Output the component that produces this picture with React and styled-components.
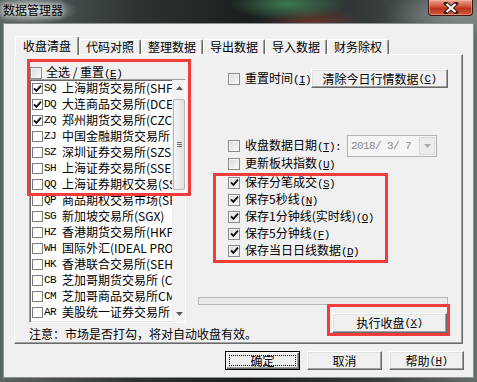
import styled, { createGlobalStyle } from "styled-components";

const GlobalStyle = createGlobalStyle`
  html, body {
    margin: 0;
    padding: 0;
    background: #1f2323;
  }
  body {
    font-family: "Noto Sans CJK SC", "Liberation Sans", sans-serif;
    font-size: 12px;
    color: #000;
  }
`;

const RED = "#f23c3c";

const Window = styled.div`
  width: 477px;
  height: 382px;
  box-sizing: border-box;
  padding: 0 3px 4px;
  display: flex;
  flex-direction: column;
  background:
    radial-gradient(46px 14px at 32px 10px, rgba(205, 212, 212, 0.85), rgba(205, 212, 212, 0)),
    radial-gradient(60px 16px at 288px 4px, rgba(70, 150, 95, 0.75), rgba(70, 150, 95, 0)),
    radial-gradient(50px 18px at 312px 24px, rgba(160, 60, 45, 0.55), rgba(160, 60, 45, 0)),
    radial-gradient(70px 26px at 455px 14px, rgba(150, 160, 160, 0.7), rgba(150, 160, 160, 0)),
    linear-gradient(90deg, #5d6565 0%, #2e3434 28%, #1a1e1e 52%, #353b3b 78%, #666e6e 100%);
`;

const TitleBar = styled.div`
  height: 23px;
  display: flex;
  justify-content: space-between;
  align-items: flex-start;
`;

const Title = styled.div`
  padding-top: 3px;
  line-height: 14px;
  color: #000;
  text-shadow: 0 0 5px rgba(255, 255, 255, 0.9), 0 0 9px rgba(255, 255, 255, 0.6);
`;

const CloseButton = styled.div`
  width: 45px;
  height: 16px;
  margin-right: 1px;
  box-sizing: border-box;
  border: 1px solid #3e1810;
  border-top: none;
  border-radius: 0 0 4px 4px;
  background: linear-gradient(#e9a494 0%, #d4583e 42%, #b9331a 55%, #cf5a3c 100%);
  box-shadow: inset 0 0 0 1px rgba(255, 200, 185, 0.45);
  display: flex;
  align-items: center;
  justify-content: center;
`;

const Client = styled.div`
  flex: 1;
  background: #f0f0f0;
  border: 1px solid #8d9393;
  padding: 12px 10px 7px;
  display: flex;
  flex-direction: column;
`;

const TabRow = styled.div`
  height: 18px;
  display: flex;
  align-items: flex-end;
`;

const Tab = styled.div`
  box-sizing: border-box;
  height: ${(p) => (p.$active ? "19px" : "15px")};
  padding: ${(p) => (p.$active ? "2px 7px 0" : "0 6px")};
  margin: ${(p) => (p.$active ? "0 0 -1px 1px" : "0")};
  position: relative;
  z-index: ${(p) => (p.$active ? 1 : 0)};
  line-height: 14px;
  white-space: nowrap;
  background: #f0f0f0;
  border: 1px solid;
  border-color: #fff #696969 transparent #fff;
  border-bottom: none;
  border-radius: 2px 2px 0 0;
  box-shadow: inset -1px 0 #a0a0a0;
`;

const Panel = styled.div`
  position: relative;
  box-sizing: border-box;
  height: 290px;
  border: 1px solid;
  border-color: #fff #696969 #696969 #fff;
  box-shadow: inset -1px -1px #a0a0a0;
  padding: 11px 12px 1px 14px;
  display: grid;
  grid-template-columns: 157px 252px;
  column-gap: 12px;
`;

const Highlight = styled.div`
  position: absolute;
  left: 12px;
  top: 4px;
  width: 164px;
  height: 137px;
  box-sizing: border-box;
  border: 3px solid ${RED};
  pointer-events: none;
  z-index: 2;
`;

const LeftCol = styled.div`
  display: flex;
  flex-direction: column;
`;

const RightCol = styled.div`
  display: flex;
  flex-direction: column;
  align-items: flex-start;
`;

const CheckRow = styled.div`
  display: flex;
  align-items: center;
  height: ${(p) => p.$h || 13}px;
  margin-left: ${(p) => p.$indent || 0}px;
  margin-top: ${(p) => p.$top || 0}px;
  white-space: nowrap;
`;

const Label = styled.span`
  margin-left: ${(p) => (p.$gap ?? 5)}px;
  line-height: 14px;
`;

const Box = styled.span`
  box-sizing: border-box;
  width: ${(p) => (p.$flat ? 11 : 12)}px;
  height: ${(p) => (p.$flat ? 11 : 12)}px;
  flex-shrink: 0;
  display: inline-flex;
  align-items: center;
  justify-content: center;
  border: 1px solid ${(p) => (p.$flat ? "#7c7c7c" : "#8a8a8a")};
  background: ${(p) => (p.$flat ? "#fff" : "linear-gradient(135deg, #d9d9d9, #fbfbfb)")};
  box-shadow: ${(p) => (p.$flat ? "none" : "inset 0 0 0 1px #f4f4f4")};
`;

const Checkbox = ({ checked, flat }) => (
  <Box $flat={flat}>
    {checked && (
      <svg width="9" height="9" viewBox="0 0 9 9">
        <path d="M1 4.3 L3.4 6.8 L8 1.6" fill="none" stroke="#111" strokeWidth="1.9" />
      </svg>
    )}
  </Box>
);

// SimSun-like half-width latin: 6px per glyph
const KeyText = styled.span`
  font-family: "Liberation Mono", monospace;
  font-size: 11px;
  letter-spacing: -0.6px;
`;

const Key = ({ k }) => (
  <KeyText>
    (<u>{k}</u>)
  </KeyText>
);

const ListBox = styled.div`
  box-sizing: border-box;
  height: 244px;
  background: #fff;
  border: 1px solid;
  border-color: #a0a0a0 #fff #fff #a0a0a0;
  box-shadow: inset 1px 1px #696969, inset -1px -1px #e3e3e3;
  display: flex;
  overflow: hidden;
`;

const Items = styled.div`
  flex: 1;
  overflow: hidden;
  padding-left: 2px;
`;

const Item = styled.div`
  height: 16px;
  display: flex;
  align-items: center;
  white-space: nowrap;
`;

const Code = styled.span`
  font-family: "Liberation Mono", monospace;
  font-size: 11px;
  letter-spacing: -0.6px;
  width: 18px;
  margin-left: 1px;
  flex-shrink: 0;
`;

const Name = styled.span`
  line-height: 14px;
`;

const ScrollBar = styled.div`
  width: 12px;
  display: flex;
  flex-direction: column;
  background: #f3f3f3;
  border-left: 1px solid #ececec;
`;

const ArrowButton = styled.div`
  height: 16px;
  display: flex;
  align-items: center;
  justify-content: center;
`;

const Track = styled.div`
  flex: 1;
  padding-top: 3px;
`;

const Thumb = styled.div`
  box-sizing: border-box;
  height: 91px;
  border: 1px solid #b6b6b6;
  border-radius: 2px;
  background: linear-gradient(90deg, #f6f6f6, #e2e2e2);
  display: flex;
  flex-direction: column;
  align-items: center;
  justify-content: center;
  gap: 1px;
`;

const Grip = styled.span`
  width: 5px;
  height: 1px;
  background: #6f6f6f;
`;

const Note = styled.div`
  margin-top: 3px;
  line-height: 16px;
  white-space: nowrap;
`;

const Button = styled.button`
  box-sizing: border-box;
  width: ${(p) => p.$w}px;
  height: ${(p) => p.$h || 19}px;
  padding: 0;
  font: inherit;
  font-size: 12px;
  line-height: 14px;
  color: #000;
  background: #f0f0f0;
  border: 1px solid;
  border-color: ${(p) => (p.$default ? "#000" : "#fff #696969 #696969 #fff")};
  box-shadow: ${(p) =>
    p.$default
      ? "inset 1px 1px #fff, inset -1px -1px #696969, inset -2px -2px #a0a0a0"
      : "inset -1px -1px #a0a0a0, inset 1px 1px #e3e3e3"};
  display: flex;
  align-items: center;
  justify-content: center;
  flex-shrink: 0;
  white-space: nowrap;
`;

const Focus = styled.span`
  display: flex;
  align-items: center;
  justify-content: center;
  width: calc(100% - 8px);
  height: calc(100% - 8px);
  outline: 1px dotted #000;
`;

const Combo = styled.div`
  box-sizing: border-box;
  width: 90px;
  height: 22px;
  margin-left: 6px;
  border: 1px solid #adb2b5;
  background: #f4f4f4;
  display: flex;
`;

const ComboText = styled.span`
  flex: 1;
  padding-left: 3px;
  font-family: "Liberation Mono", monospace;
  font-size: 11px;
  letter-spacing: -0.6px;
  line-height: 20px;
  color: #8a8a8a;
  white-space: pre;
`;

const ComboDrop = styled.span`
  box-sizing: border-box;
  width: 16px;
  margin: 1px;
  border: 1px solid #dadada;
  background: #ececec;
  display: flex;
  align-items: center;
  justify-content: center;
`;

const SaveGroup = styled.div`
  box-sizing: border-box;
  margin: 3px 0 0 15px;
  width: 175px;
  height: 90px;
  border: 3px solid ${RED};
  padding-left: 12px;
  display: flex;
  flex-direction: column;
`;

const SaveRow = styled.div`
  height: 17px;
  display: flex;
  align-items: center;
  white-space: nowrap;
  &:first-child {
    margin-top: -2px;
  }
`;

const Progress = styled.div`
  box-sizing: border-box;
  margin-top: 34px;
  width: 250px;
  height: 8px;
  border: 1px solid #b7b7b7;
  background: #eaeaea;
`;

const RunGroup = styled.div`
  box-sizing: border-box;
  margin-top: -1px;
  align-self: flex-end;
  width: 123px;
  height: 32px;
  border: 3px solid ${RED};
  padding: 6px 0 0 2px;
`;

const ButtonBar = styled.div`
  margin: 7px -1px 0 0;
  display: flex;
  justify-content: flex-end;
  gap: 7px;
`;

const exchanges = [
  ["SQ", "上海期货交易所(SHFE)", true],
  ["DQ", "大连商品交易所(DCE)", true],
  ["ZQ", "郑州期货交易所(CZCE)", true],
  ["ZJ", "中国金融期货交易所", false],
  ["SZ", "深圳证券交易所(SZSE)", false],
  ["SH", "上海证券交易所(SSE)", false],
  ["QQ", "上海证券期权交易(SSE)", false],
  ["QP", "商品期权交易市场(SHFE)", false],
  ["SG", "新加坡交易所(SGX)", false],
  ["HZ", "香港期货交易所(HKFE)", false],
  ["WH", "国际外汇(IDEAL PRO)", false],
  ["HK", "香港联合交易所(SEHK)", false],
  ["CB", "芝加哥期货交易所 (CBOT)", false],
  ["CM", "芝加哥商品交易所CME", false],
  ["AR", "美股统一证券交易所", false],
];

const saveOptions = [
  ["保存分笔成交", "S"],
  ["保存5秒线", "N"],
  ["保存1分钟线(实时线)", "O"],
  ["保存5分钟线", "F"],
  ["保存当日日线数据", "D"],
];

const tabs = ["收盘清盘", "代码对照", "整理数据", "导出数据", "导入数据", "财务除权"];

const Arrow = ({ down, color = "#5a5a5a" }) => (
  <svg width="7" height="4" viewBox="0 0 7 4">
    <path d={down ? "M0 0 H7 L3.5 4 Z" : "M0 4 H7 L3.5 0 Z"} fill={color} />
  </svg>
);

export default function App() {
  return (
    <>
      <GlobalStyle />
      <Window>
        <TitleBar>
          <Title>数据管理器</Title>
          <CloseButton>
            <svg width="16" height="12" viewBox="0 0 16 12">
              <path d="M3 1.5 L13 10.5 M13 1.5 L3 10.5" stroke="#3a1a14" strokeWidth="4" strokeLinecap="square" />
              <path d="M3.5 2 L12.5 10 M12.5 2 L3.5 10" stroke="#fff" strokeWidth="2.2" />
            </svg>
          </CloseButton>
        </TitleBar>
        <Client>
          <TabRow>
            {tabs.map((t, i) => (
              <Tab key={t} $active={i === 0}>
                {t}
              </Tab>
            ))}
          </TabRow>
          <Panel>
            <Highlight />
            <LeftCol>
              <CheckRow $indent={1}>
                <Checkbox />
                <Label $gap={4}>
                  全选 / 重置<Key k="E" />
                </Label>
              </CheckRow>
              <ListBox>
                <Items>
                  {exchanges.map(([code, name, on]) => (
                    <Item key={code}>
                      <Checkbox flat checked={on} />
                      <Code>{code}</Code>
                      <Name>{name}</Name>
                    </Item>
                  ))}
                </Items>
                <ScrollBar>
                  <ArrowButton>
                    <Arrow />
                  </ArrowButton>
                  <Track>
                    <Thumb>
                      <Grip />
                      <Grip />
                      <Grip />
                    </Thumb>
                  </Track>
                  <ArrowButton>
                    <Arrow down />
                  </ArrowButton>
                </ScrollBar>
              </ListBox>
              <Note>注意：市场是否打勾，将对自动收盘有效。</Note>
            </LeftCol>
            <RightCol>
              <CheckRow $indent={30} $top={3} $h={19}>
                <Checkbox />
                <Label>
                  重置时间<Key k="I" />
                </Label>
                <Button $w={137}>
                  清除今日行情数据<Key k="C" />
                </Button>
              </CheckRow>
              <CheckRow $indent={30} $top={47} $h={22}>
                <Checkbox />
                <Label>
                  收盘数据日期<Key k="T" />
                  <KeyText>:</KeyText>
                </Label>
                <Combo>
                  <ComboText>2018/ 3/ 7</ComboText>
                  <ComboDrop>
                    <Arrow down color="#a8a8a8" />
                  </ComboDrop>
                </Combo>
              </CheckRow>
              <CheckRow $indent={30}>
                <Checkbox />
                <Label>
                  更新板块指数<Key k="U" />
                </Label>
              </CheckRow>
              <SaveGroup>
                {saveOptions.map(([text, k]) => (
                  <SaveRow key={k}>
                    <Checkbox checked />
                    <Label>
                      {text}
                      <Key k={k} />
                    </Label>
                  </SaveRow>
                ))}
              </SaveGroup>
              <Progress />
              <RunGroup>
                <Button $w={115} $h={20}>
                  执行收盘<Key k="X" />
                </Button>
              </RunGroup>
            </RightCol>
          </Panel>
          <ButtonBar>
            <Button $w={75} $default>
              <Focus>确定</Focus>
            </Button>
            <Button $w={75}>取消</Button>
            <Button $w={75}>
              帮助<Key k="H" />
            </Button>
          </ButtonBar>
        </Client>
      </Window>
    </>
  );
}
